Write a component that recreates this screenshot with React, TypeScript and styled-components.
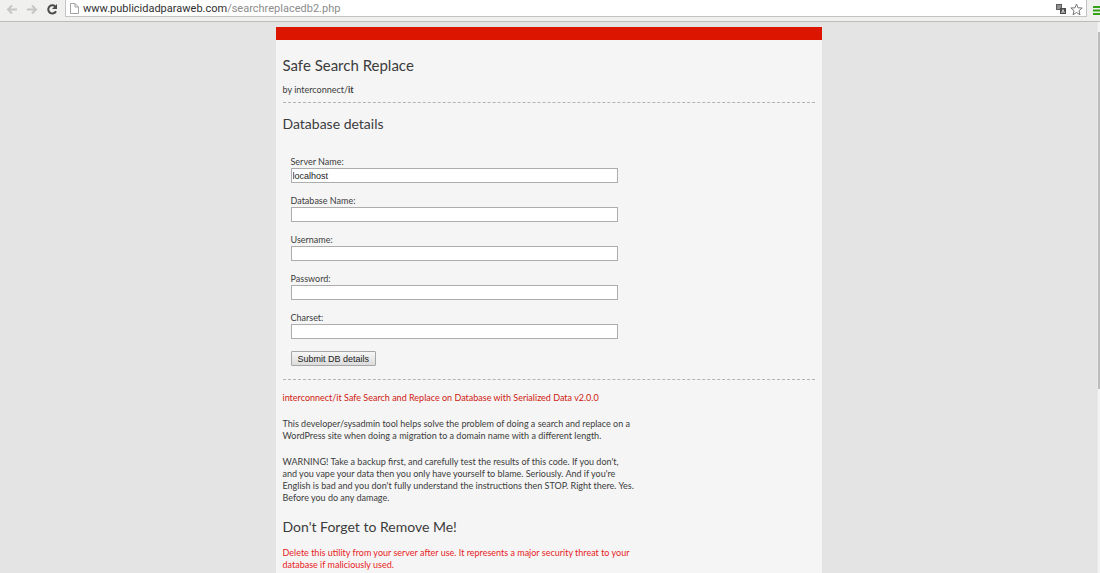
import React from "react";
import styled, { createGlobalStyle } from "styled-components";

const Global = createGlobalStyle`
  * { box-sizing: border-box; }
  body { margin: 0; background: #e4e4e4; }
`;

const Browser = styled.div`
  display: flex;
  flex-direction: column;
  height: 100vh;
  overflow: hidden;
  font: 9px/12px Lato, "Open Sans", sans-serif;
  color: #3c3c3c;
`;

const Toolbar = styled.header`
  display: flex;
  flex: none;
  height: 22px;
  background: #f0f0ef;
  border-bottom: 1px solid #bcbcbc;
  overflow: hidden;
`;

const NavButtons = styled.nav`
  display: flex;
  gap: 6px;
  flex: none;
  width: 65px;
  padding: 2px 0 0 5px;
`;

const IconButton = styled.button`
  display: block;
  flex: none;
  height: 14px;
  padding: 0;
  border: 0;
  background: none;
  line-height: 0;
`;

const AddressBar = styled.div`
  display: flex;
  flex: 1;
  gap: 4px;
  height: 17px;
  padding: 2px 3px 0 4px;
  background: #fff;
  border: solid #c4c4c4;
  border-width: 0 1px 1px;
`;

const Address = styled.div`
  flex: 1;
  font: 11px/14px Roboto, "Open Sans", sans-serif;
  color: #8c8c8c;
  white-space: nowrap;
`;

const Host = styled.span`
  color: #303030;
`;

const MenuButton = styled(IconButton)`
  width: 13px;
  height: 17px;
  padding: 3px 0 0 6px;
  overflow: hidden;
`;

const Viewport = styled.div`
  display: flex;
  flex: 1;
  min-height: 0;
`;

const Page = styled.main`
  flex: 1;
  overflow: hidden;
  padding-top: 5px;
`;

const ScrollTrack = styled.div`
  flex: none;
  width: 3px;
  padding-top: 10px;
  background: #f3f3f3;
  border-left: 1px solid #e9e9e9;
`;

const ScrollThumb = styled.div`
  height: 66%;
  background: #bdbdbd;
`;

const Card = styled.div`
  max-width: 546px;
  min-height: 100%;
  margin: 0 auto;
  padding: 15px 7px 0;
  background: #f5f5f5;
  border-top: 13px solid #dc1500;
`;

const Title = styled.h1`
  margin: 0;
  font-size: 15px;
  line-height: 20px;
  font-weight: 400;
`;

const Byline = styled.p`
  margin: 9px 0 6px;
`;

const Subtitle = styled.h2`
  margin: 0;
  font-size: 14px;
  line-height: 18px;
  font-weight: 400;
`;

const Rule = styled.hr`
  margin: 0;
  border: 0;
  border-top: 1px dashed #b4b4b4;
`;

const Form = styled.form`
  display: flex;
  flex-direction: column;
  align-items: flex-start;
  gap: 12px;
  width: 343px;
  padding: 23px 8px 13px;
`;

const Field = styled.div`
  display: flex;
  flex-direction: column;
  width: 100%;
`;

const Label = styled.label`
  line-height: 12px;
`;

const Input = styled.input`
  width: 100%;
  height: 15px;
  padding: 0 1px;
  border: 1px solid #adadad;
  border-radius: 0;
  background: #fff;
  font: 9px/13px "Liberation Sans", Arial, sans-serif;
  color: #222;
`;

const Submit = styled.button`
  height: 15px;
  padding: 0 6px;
  border: 1px solid #a6a6a6;
  border-radius: 1px;
  background: linear-gradient(#f6f6f6, #dcdcdc);
  font: 9px/12px "Liberation Sans", Arial, sans-serif;
  color: #222;
`;

const Paragraph = styled.p<{ $color?: string }>`
  margin: 0 0 14px;
  color: ${(p) => p.$color ?? "inherit"};
  white-space: nowrap;
`;

const Info = styled.section`
  padding-top: 12px;
`;

const Warning = styled.section`
  display: flex;
  flex-direction: column;
  gap: 11px;
`;

const fields = [
  { id: "host", label: "Server Name:", value: "localhost" },
  { id: "data", label: "Database Name:" },
  { id: "user", label: "Username:" },
  { id: "pass", label: "Password:", type: "password" },
  { id: "char", label: "Charset:" },
];

function Arrow({ back }: { back?: boolean }) {
  return (
    <svg width="14" height="13" viewBox="0 0 14 13" fill="none" stroke="#c6c6c6" strokeWidth="2">
      <path d={back ? "M12 6.5H3M7 2.5L3 6.5L7 10.5" : "M2 6.5H11M7 2.5L11 6.5L7 10.5"} />
    </svg>
  );
}

export default function App() {
  return (
    <Browser>
      <Global />
      <Toolbar>
        <NavButtons>
          <IconButton aria-label="Back"><Arrow back /></IconButton>
          <IconButton aria-label="Forward"><Arrow /></IconButton>
          <IconButton aria-label="Reload">
            <svg width="14" height="13" viewBox="0 0 14 13" fill="none">
              <path d="M10.2 3.4A4.1 4.1 0 1 0 11 8.2" stroke="#4a4a4a" strokeWidth="2" />
              <path d="M12 1V6H7Z" fill="#4a4a4a" />
            </svg>
          </IconButton>
        </NavButtons>
        <AddressBar>
          <svg width="9" height="12" viewBox="0 0 9 12" fill="#fff" stroke="#a2a2a2">
            <path d="M.5 1.5H5L8.5 5V11.5H.5ZM5 1.5V5H8.5" />
          </svg>
          <Address><Host>www.publicidadparaweb.com</Host>/searchreplacedb2.php</Address>
          <IconButton aria-label="Translate">
            <svg width="10" height="12" viewBox="0 0 10 12">
              <rect y="1" width="6" height="6" fill="#5c5c5c" />
              <path d="M1 3H5M1 5H5" stroke="#c4c4c4" />
              <rect x="4" y="5" width="6" height="6" fill="#4c4c4c" />
              <path d="M5.5 10L7 6.5L8.5 10M6 9H8" stroke="#e4e4e4" strokeWidth=".8" fill="none" />
            </svg>
          </IconButton>
          <IconButton aria-label="Bookmark">
            <svg width="13" height="13" viewBox="0 0 13 13" fill="#fff" stroke="#777">
              <path d="M6.5 1L8 4.8L12.2 5L9 7.7L10 11.8L6.5 9.5L3 11.8L4 7.7L.8 5L5 4.8Z" />
            </svg>
          </IconButton>
        </AddressBar>
        <MenuButton aria-label="Menu">
          <svg width="12" height="11" viewBox="0 0 12 11" stroke="#35a318" strokeWidth="2">
            <path d="M0 2H12M0 5.5H12M0 9H12" />
          </svg>
        </MenuButton>
      </Toolbar>
      <Viewport>
        <Page>
          <Card>
            <Title>Safe Search Replace</Title>
            <Byline>by interconnect/<b>it</b></Byline>
            <Rule />
            <Info>
              <Subtitle>Database details</Subtitle>
              <Form onSubmit={(e) => e.preventDefault()}>
                {fields.map((f) => (
                  <Field key={f.id}>
                    <Label htmlFor={f.id}>{f.label}</Label>
                    <Input id={f.id} type={f.type ?? "text"} defaultValue={f.value} />
                  </Field>
                ))}
                <Submit type="submit">Submit DB details</Submit>
              </Form>
            </Info>
            <Rule />
            <Info>
              <Paragraph $color="#d02010">
                interconnect/it Safe Search and Replace on Database with Serialized Data v2.0.0
              </Paragraph>
              <Paragraph>
                This developer/sysadmin tool helps solve the problem of doing a search and replace on a<br />
                WordPress site when doing a migration to a domain name with a different length.
              </Paragraph>
              <Paragraph>
                WARNING! Take a backup first, and carefully test the results of this code. If you don't,<br />
                and you vape your data then you only have yourself to blame. Seriously. And if you're<br />
                English is bad and you don't fully understand the instructions then STOP. Right there. Yes.<br />
                Before you do any damage.
              </Paragraph>
            </Info>
            <Warning>
              <Subtitle>Don't Forget to Remove Me!</Subtitle>
              <Paragraph $color="#e81c24">
                Delete this utility from your server after use. It represents a major security threat to your<br />
                database if maliciously used.
              </Paragraph>
            </Warning>
          </Card>
        </Page>
        <ScrollTrack><ScrollThumb /></ScrollTrack>
      </Viewport>
    </Browser>
  );
}
